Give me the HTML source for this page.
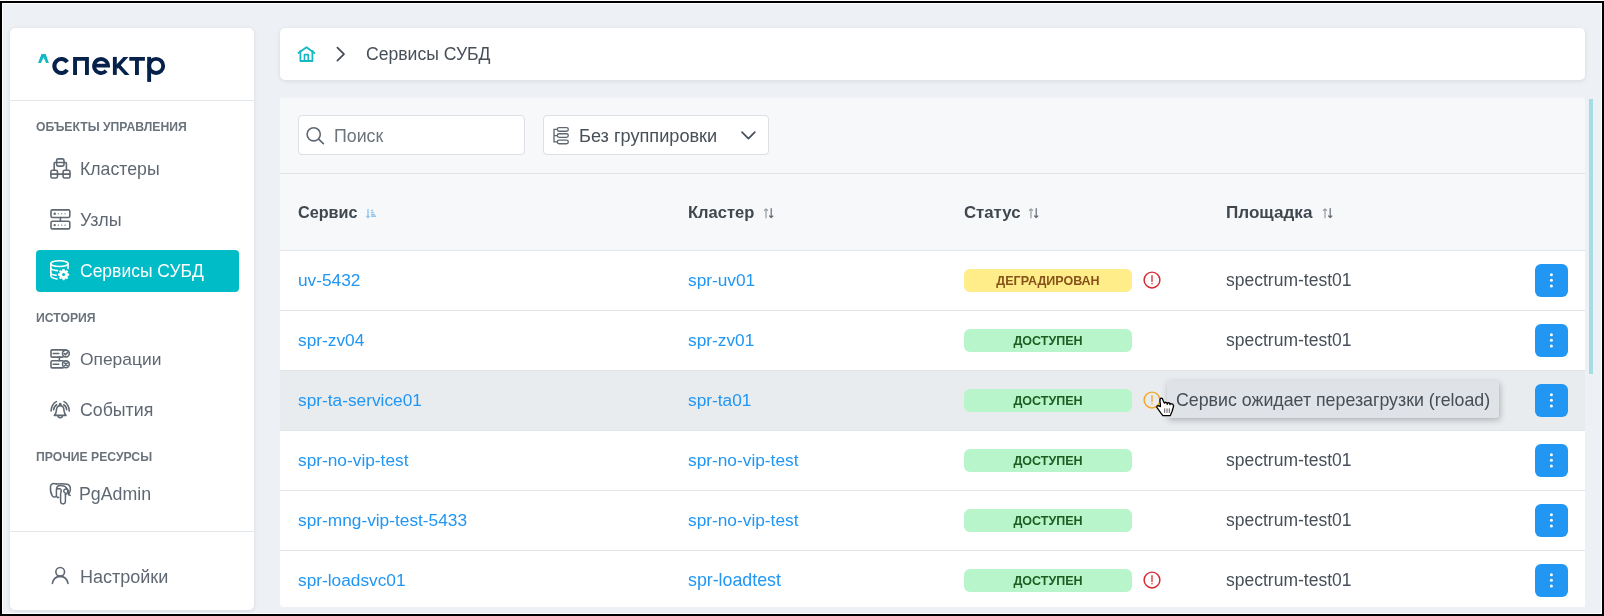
<!DOCTYPE html>
<html><head><meta charset="utf-8">
<style>
*{box-sizing:border-box;margin:0;padding:0}
html,body{width:1604px;height:616px;overflow:hidden;background:#000}
body{font-family:"Liberation Sans",sans-serif;position:relative}
.abs{position:absolute}
.card{position:absolute;background:#fff;border-radius:5px;box-shadow:0 1px 4px rgba(40,50,70,.11)}
.t{position:absolute;white-space:nowrap;line-height:1;will-change:transform}
.badge{width:168px;height:23px;border-radius:6px;font-size:12.5px;font-weight:700;text-align:center;line-height:24.6px;will-change:transform}
</style></head>
<body>
<div class="abs" style="left:0;top:0;width:1604px;height:1px;background:#fff"></div>
<div class="abs" style="left:2px;top:3px;width:1600px;height:611px;background:#fff"></div>
<div class="abs" style="left:3px;top:4px;width:1598px;height:609px;background:#edf0f4"></div>
<div class="card" style="left:10px;top:28px;width:244px;height:582px"></div>
<div class="abs" style="left:10px;top:100px;width:244px;height:1px;background:#e2e5e9"></div>
<div class="abs" style="left:10px;top:531px;width:244px;height:1px;background:#e2e5e9"></div>
<svg class="abs" style="left:0;top:0" width="200" height="100" viewBox="0 0 200 100">
<polygon points="41.5,53.9 45.7,53.9 48.9,62.9 46.1,62.9 43.6,57.5 40.9,62.9 38,62.9" fill="#14b8c4"/>
<defs><clipPath id="kc"><rect x="110" y="56.9" width="22" height="18"/></clipPath></defs>
<g fill="none" stroke="#06224a" stroke-width="3.9" stroke-linejoin="miter">
<path d="M67.2 62.1 A7 7 0 1 0 67.2 69.9" stroke-width="4.1"/>
<path d="M75.05 74.9 V58.85 H86.95 V74.9"/>
<path d="M94.05 65.6 H108.05 A7 7 0 1 0 106.2 70.8" stroke-width="3.8"/>
<path d="M114.85 56.9 V74.9"/>
<g clip-path="url(#kc)" stroke-width="3.6"><path d="M116.2 67.4 L127.2 55.6"/><path d="M117.4 64.2 L128.2 76.1"/></g>
<path d="M129.3 58.85 H144.9 M136.95 58.85 V74.9"/>
<path d="M149.15 56.9 V81.9"/>
<circle cx="156.15" cy="65.9" r="7.05"/>
</g>
</svg>
<div class="t" style="left:36px;top:120.67px;font-size:12.2px;color:#6a737c;font-weight:700;letter-spacing:0px;">ОБЪЕКТЫ УПРАВЛЕНИЯ</div>
<div class="t" style="left:36px;top:311.67px;font-size:12.2px;color:#6a737c;font-weight:700;letter-spacing:0px;">ИСТОРИЯ</div>
<div class="t" style="left:36px;top:451.07px;font-size:12.2px;color:#6a737c;font-weight:700;letter-spacing:0px;">ПРОЧИЕ РЕСУРСЫ</div>
<div class="abs" style="left:36px;top:250px;width:203px;height:42px;background:#00bcc7;border-radius:4px"></div>
<div class="t" style="left:79.5px;top:161.02px;font-size:17.7px;color:#5f6872;font-weight:400;letter-spacing:0px;">Кластеры</div>
<div class="t" style="left:79.5px;top:211.55px;font-size:17.9px;color:#5f6872;font-weight:400;letter-spacing:0px;">Узлы</div>
<div class="t" style="left:79.5px;top:263.29px;font-size:17.5px;color:#fff;font-weight:400;letter-spacing:0px;">Сервисы СУБД</div>
<div class="t" style="left:79.5px;top:351.07px;font-size:17.4px;color:#5f6872;font-weight:400;letter-spacing:0px;">Операции</div>
<div class="t" style="left:79.5px;top:402.17px;font-size:17.75px;color:#5f6872;font-weight:400;letter-spacing:0px;">События</div>
<div class="t" style="left:78.5px;top:485.83px;font-size:17.8px;color:#5f6872;font-weight:400;letter-spacing:0px;">PgAdmin</div>
<div class="t" style="left:79.5px;top:567.76px;font-size:18.0px;color:#5f6872;font-weight:400;letter-spacing:0px;">Настройки</div>
<svg class="abs" style="left:0;top:0" width="260" height="616" viewBox="0 0 260 616" fill="none" stroke="#5f6872" stroke-width="1.6" stroke-linecap="round" stroke-linejoin="round">
<!-- clusters -->
<rect x="56.6" y="158.9" width="7.4" height="7.2" rx="1.6"/>
<line x1="56.6" y1="162.5" x2="64" y2="162.5"/>
<rect x="50.9" y="170.2" width="6.6" height="7.8" rx="1.6"/>
<line x1="50.9" y1="174.1" x2="57.5" y2="174.1"/>
<rect x="63.1" y="170.2" width="6.9" height="7.8" rx="1.6"/>
<line x1="63.1" y1="174.1" x2="70" y2="174.1"/>
<path d="M56.6 162.5 H55 Q54.2 162.5 54.2 163.3 V170.2"/>
<path d="M64 162.5 H65.6 Q66.4 162.5 66.4 163.3 V170.2"/>
<line x1="57.5" y1="174.1" x2="63.1" y2="174.1"/>
<!-- nodes -->
<rect x="51" y="209.9" width="18.8" height="7.6" rx="1.4"/>
<rect x="51" y="221.3" width="18.8" height="7.6" rx="1.4"/>
<line x1="60.4" y1="217.5" x2="60.4" y2="221.3"/>
<circle cx="54.7" cy="213.7" r="1.2" fill="#5f6872" stroke="none"/>
<circle cx="54.7" cy="225.1" r="1.2" fill="#5f6872" stroke="none"/>
<g stroke-width="1.1"><line x1="58.3" y1="213.7" x2="58.6" y2="213.7"/><line x1="61.6" y1="213.7" x2="61.9" y2="213.7"/><line x1="64.9" y1="213.7" x2="65.2" y2="213.7"/>
<line x1="58.3" y1="225.1" x2="58.6" y2="225.1"/><line x1="61.6" y1="225.1" x2="61.9" y2="225.1"/><line x1="64.9" y1="225.1" x2="65.2" y2="225.1"/></g>
<!-- operations -->
<path d="M63 349.9 H52.2 Q51 349.9 51 351.1 V355.9 Q51 357.1 52.2 357.1 H63"/>
<circle cx="65.9" cy="353.5" r="3.4"/>
<line x1="53.2" y1="353.5" x2="58.8" y2="353.5"/>
<path d="M64.3 353.6 L65.5 354.8 L67.5 352.4"/>
<path d="M63 360.7 H52.2 Q51 360.7 51 361.9 V366.7 Q51 367.9 52.2 367.9 H63"/>
<circle cx="65.9" cy="364.3" r="3.4"/>
<line x1="53.2" y1="364.3" x2="58.8" y2="364.3"/>
<path d="M64.6 363 L67.2 365.6 M67.2 363 L64.6 365.6"/>
<line x1="59.4" y1="357.1" x2="59.4" y2="360.7"/>
<line x1="63" y1="349.9" x2="65.9" y2="350.1"/>
<!-- events bell -->
<circle cx="60.2" cy="404.2" r="0.7" fill="#5f6872"/>
<path d="M57.7 406.6 Q60.2 404.6 62.7 406.6 Q63.9 408 64.1 411 Q64.3 413.6 66 415.4 H54.4 Q56.1 413.6 56.3 411 Q56.5 408 57.7 406.6 Z"/>
<path d="M58 416.4 Q60.2 419 62.4 416.4"/>
<path d="M56.4 401.6 Q51.6 404 51.1 411"/>
<path d="M64 401.6 Q68.8 404 69.3 411"/>
<path d="M56.7 404.8 Q54 406.3 53.7 409.8"/>
<path d="M63.7 404.8 Q66.4 406.3 66.7 409.8"/>
<!-- pgadmin elephant -->
<g stroke-width="1.5">
<path d="M56.4 484.0 C53.5 483.0 50.8 483.6 50.5 486.2 C50.2 489.5 50.9 493.5 52.2 495.6 C53.2 497.4 55.0 497.6 56.4 496.2"/>
<path d="M56.4 484.0 C60 483.6 64.5 483.6 67.2 484.3 C69.8 485.0 70.6 487.5 70.3 490.0 C70.1 492.0 69.2 493.6 68.6 494.6 L70.2 495.4"/>
<path d="M56.4 496.2 V490.0 C56.4 487.0 58.0 485.6 60.5 485.6 C63.5 485.6 65.5 486.6 66.2 488.0"/>
<path d="M57.0 489.0 C59.0 488.3 61.0 488.8 61.2 490.3 C61.3 491.5 60.8 492.5 60.6 494.0 V501.6 C60.6 503.2 61.8 503.9 63.0 503.9 C64.3 503.9 65.4 503.0 65.4 501.6 V494.5"/>
<path d="M65.4 494.5 C67.5 493.5 68.0 491.5 67.5 490.0 C66.8 488.5 64.8 488.7 64.0 490.0 C63.4 491.2 64.0 492.6 65.2 493.0"/>
<path d="M66.2 487.8 C68.0 488.8 68.8 491.5 68.6 494.6"/>
<path d="M56.5 496.3 L57.6 497.6 L58.8 497.6"/>
</g>
<!-- settings user -->
<circle cx="60.2" cy="571.8" r="4.35"/>
<path d="M52.4 583.4 Q53.6 576.6 60.2 576.4 Q66.8 576.6 68 583.4"/>
</svg>
<svg class="abs" style="left:0;top:0" width="260" height="300" viewBox="0 0 260 300" fill="none" stroke="#fff" stroke-width="1.6" stroke-linecap="round">
<ellipse cx="59.4" cy="263.6" rx="8.6" ry="2.9"/>
<path d="M50.8 263.6 V275.8 Q51 278 57 279"/>
<path d="M50.8 268.2 Q51.2 270.2 57.4 270.6"/>
<path d="M50.8 272.8 Q51.2 274.8 56.2 275.2"/>
<path d="M68 263.6 V268.4"/>
</svg>
<svg class="abs" style="left:0;top:0" width="260" height="300" viewBox="0 0 260 300">
<g transform="translate(63.6 274.6)" fill="#fff"><circle r="4.4"/><rect x="-1.1" y="-5.6" width="2.2" height="2.6" rx="0.4" transform="rotate(0)"/><rect x="-1.1" y="-5.6" width="2.2" height="2.6" rx="0.4" transform="rotate(45)"/><rect x="-1.1" y="-5.6" width="2.2" height="2.6" rx="0.4" transform="rotate(90)"/><rect x="-1.1" y="-5.6" width="2.2" height="2.6" rx="0.4" transform="rotate(135)"/><rect x="-1.1" y="-5.6" width="2.2" height="2.6" rx="0.4" transform="rotate(180)"/><rect x="-1.1" y="-5.6" width="2.2" height="2.6" rx="0.4" transform="rotate(225)"/><rect x="-1.1" y="-5.6" width="2.2" height="2.6" rx="0.4" transform="rotate(270)"/><rect x="-1.1" y="-5.6" width="2.2" height="2.6" rx="0.4" transform="rotate(315)"/><circle r="1.5" fill="#00bcc7"/></g>
</svg>
<div class="card" style="left:280px;top:28px;width:1305px;height:52px"></div>
<svg class="abs" style="left:280px;top:28px" width="100" height="52" viewBox="280 28 100 52" fill="none" stroke-linecap="round" stroke-linejoin="round">
<path d="M298.4 53 L306.5 47.2 L314.4 53" stroke="#17b7c3" stroke-width="1.8"/>
<path d="M300.4 50.8 V61 H312.4 V50.8" stroke="#17b7c3" stroke-width="1.8"/>
<path d="M304.5 61 V54.6 H308.3 V61" stroke="#17b7c3" stroke-width="1.6"/>
<path d="M337.4 47.6 L344 54.2 L337.4 60.6" stroke="#404953" stroke-width="1.7"/>
</svg>
<div class="t" style="left:365.5px;top:46.20px;font-size:17.6px;color:#474f58;font-weight:400;letter-spacing:0px;">Сервисы СУБД</div>
<div class="card" style="left:280px;top:98px;width:1305px;height:509px;overflow:hidden;box-shadow:none;border-radius:4px 0 0 4px"><div class="abs" style="left:0;top:0;width:1305px;height:152px;background:#f7f8fa"></div><div class="abs" style="left:0;top:75px;width:1305px;height:1px;background:#e1e4e8"></div><div class="abs" style="left:0;top:152px;width:1305px;height:1px;background:#e1e4e8"></div></div>
<div class="abs" style="left:280px;top:310px;width:1305px;height:1px;background:#e1e4e8"></div>
<div class="t" style="left:298.1px;top:271.66px;font-size:17.3px;color:#2196f3;font-weight:400;letter-spacing:0px;">uv-5432</div>
<div class="t" style="left:687.6px;top:271.66px;font-size:17.3px;color:#2196f3;font-weight:400;letter-spacing:0px;">spr-uv01</div>
<div class="abs badge" style="left:964px;top:269px;background:#ffed89;color:#86521a"><span>ДЕГРАДИРОВАН</span></div>
<svg class="abs" style="left:1140px;top:268px" width="24" height="24" viewBox="-12 -12 24 24" fill="none" stroke="#d7282f">
<circle r="7.9" stroke-width="1.45"/><line x1="0" y1="-4.3" x2="0" y2="1.5" stroke-width="1.3" stroke-linecap="round"/><circle cy="3.7" r="0.75" fill="#d7282f" stroke="none"/></svg>
<div class="t" style="left:1225.6px;top:271.99px;font-size:17.5px;color:#474f58;font-weight:400;letter-spacing:0px;">spectrum-test01</div>
<div class="abs" style="left:1535px;top:264px;width:33px;height:33px;border-radius:6px;background:#2196f3"></div>
<svg class="abs" style="left:1535px;top:264px" width="33" height="33" viewBox="0 0 33 33" fill="#fff"><circle cx="16.4" cy="10.7" r="1.5"/><circle cx="16.4" cy="16.3" r="1.5"/><circle cx="16.4" cy="21.9" r="1.5"/></svg>
<div class="abs" style="left:280px;top:370px;width:1305px;height:1px;background:#e1e4e8"></div>
<div class="t" style="left:298.1px;top:331.66px;font-size:17.3px;color:#2196f3;font-weight:400;letter-spacing:0px;">spr-zv04</div>
<div class="t" style="left:687.6px;top:331.66px;font-size:17.3px;color:#2196f3;font-weight:400;letter-spacing:0px;">spr-zv01</div>
<div class="abs badge" style="left:964px;top:329px;background:#b9f5cb;color:#1b5e20"><span>ДОСТУПЕН</span></div>
<div class="t" style="left:1225.6px;top:331.99px;font-size:17.5px;color:#474f58;font-weight:400;letter-spacing:0px;">spectrum-test01</div>
<div class="abs" style="left:1535px;top:324px;width:33px;height:33px;border-radius:6px;background:#2196f3"></div>
<svg class="abs" style="left:1535px;top:324px" width="33" height="33" viewBox="0 0 33 33" fill="#fff"><circle cx="16.4" cy="10.7" r="1.5"/><circle cx="16.4" cy="16.3" r="1.5"/><circle cx="16.4" cy="21.9" r="1.5"/></svg>
<div class="abs" style="left:280px;top:371px;width:1305px;height:59px;background:#e9ecef"></div>
<div class="abs" style="left:280px;top:430px;width:1305px;height:1px;background:#e1e4e8"></div>
<div class="t" style="left:298.1px;top:391.66px;font-size:17.3px;color:#2196f3;font-weight:400;letter-spacing:0px;">spr-ta-service01</div>
<div class="t" style="left:687.6px;top:391.66px;font-size:17.3px;color:#2196f3;font-weight:400;letter-spacing:0px;">spr-ta01</div>
<div class="abs badge" style="left:964px;top:389px;background:#b9f5cb;color:#1b5e20"><span>ДОСТУПЕН</span></div>
<svg class="abs" style="left:1140px;top:388px" width="24" height="24" viewBox="-12 -12 24 24" fill="none" stroke="#f5a623">
<circle r="7.9" stroke-width="1.45"/><line x1="0" y1="-4.3" x2="0" y2="1.5" stroke-width="1.3" stroke-linecap="round"/><circle cy="3.7" r="0.75" fill="#f5a623" stroke="none"/></svg>
<div class="t" style="left:1225.6px;top:391.99px;font-size:17.5px;color:#474f58;font-weight:400;letter-spacing:0px;">spectrum-test01</div>
<div class="abs" style="left:1535px;top:384px;width:33px;height:33px;border-radius:6px;background:#2196f3"></div>
<svg class="abs" style="left:1535px;top:384px" width="33" height="33" viewBox="0 0 33 33" fill="#fff"><circle cx="16.4" cy="10.7" r="1.5"/><circle cx="16.4" cy="16.3" r="1.5"/><circle cx="16.4" cy="21.9" r="1.5"/></svg>
<div class="abs" style="left:280px;top:490px;width:1305px;height:1px;background:#e1e4e8"></div>
<div class="t" style="left:298.1px;top:451.66px;font-size:17.3px;color:#2196f3;font-weight:400;letter-spacing:0px;">spr-no-vip-test</div>
<div class="t" style="left:687.6px;top:451.66px;font-size:17.3px;color:#2196f3;font-weight:400;letter-spacing:0px;">spr-no-vip-test</div>
<div class="abs badge" style="left:964px;top:449px;background:#b9f5cb;color:#1b5e20"><span>ДОСТУПЕН</span></div>
<div class="t" style="left:1225.6px;top:451.99px;font-size:17.5px;color:#474f58;font-weight:400;letter-spacing:0px;">spectrum-test01</div>
<div class="abs" style="left:1535px;top:444px;width:33px;height:33px;border-radius:6px;background:#2196f3"></div>
<svg class="abs" style="left:1535px;top:444px" width="33" height="33" viewBox="0 0 33 33" fill="#fff"><circle cx="16.4" cy="10.7" r="1.5"/><circle cx="16.4" cy="16.3" r="1.5"/><circle cx="16.4" cy="21.9" r="1.5"/></svg>
<div class="abs" style="left:280px;top:550px;width:1305px;height:1px;background:#e1e4e8"></div>
<div class="t" style="left:298.1px;top:511.66px;font-size:17.3px;color:#2196f3;font-weight:400;letter-spacing:0px;">spr-mng-vip-test-5433</div>
<div class="t" style="left:687.6px;top:511.66px;font-size:17.3px;color:#2196f3;font-weight:400;letter-spacing:0px;">spr-no-vip-test</div>
<div class="abs badge" style="left:964px;top:509px;background:#b9f5cb;color:#1b5e20"><span>ДОСТУПЕН</span></div>
<div class="t" style="left:1225.6px;top:511.99px;font-size:17.5px;color:#474f58;font-weight:400;letter-spacing:0px;">spectrum-test01</div>
<div class="abs" style="left:1535px;top:504px;width:33px;height:33px;border-radius:6px;background:#2196f3"></div>
<svg class="abs" style="left:1535px;top:504px" width="33" height="33" viewBox="0 0 33 33" fill="#fff"><circle cx="16.4" cy="10.7" r="1.5"/><circle cx="16.4" cy="16.3" r="1.5"/><circle cx="16.4" cy="21.9" r="1.5"/></svg>
<div class="t" style="left:298.1px;top:571.66px;font-size:17.3px;color:#2196f3;font-weight:400;letter-spacing:0px;">spr-loadsvc01</div>
<div class="t" style="left:687.6px;top:571.93px;font-size:17.8px;color:#2196f3;font-weight:400;letter-spacing:0px;">spr-loadtest</div>
<div class="abs badge" style="left:964px;top:569px;background:#b9f5cb;color:#1b5e20"><span>ДОСТУПЕН</span></div>
<svg class="abs" style="left:1140px;top:568px" width="24" height="24" viewBox="-12 -12 24 24" fill="none" stroke="#d7282f">
<circle r="7.9" stroke-width="1.45"/><line x1="0" y1="-4.3" x2="0" y2="1.5" stroke-width="1.3" stroke-linecap="round"/><circle cy="3.7" r="0.75" fill="#d7282f" stroke="none"/></svg>
<div class="t" style="left:1225.6px;top:571.99px;font-size:17.5px;color:#474f58;font-weight:400;letter-spacing:0px;">spectrum-test01</div>
<div class="abs" style="left:1535px;top:564px;width:33px;height:33px;border-radius:6px;background:#2196f3"></div>
<svg class="abs" style="left:1535px;top:564px" width="33" height="33" viewBox="0 0 33 33" fill="#fff"><circle cx="16.4" cy="10.7" r="1.5"/><circle cx="16.4" cy="16.3" r="1.5"/><circle cx="16.4" cy="21.9" r="1.5"/></svg>
<div class="abs" style="left:298px;top:115px;width:227px;height:40px;background:#fff;border:1px solid #dcdfe4;border-radius:4px"></div>
<div class="abs" style="left:543px;top:115px;width:226px;height:40px;background:#fff;border:1px solid #dcdfe4;border-radius:4px"></div>
<svg class="abs" style="left:290px;top:110px" width="500" height="50" viewBox="290 110 500 50" fill="none" stroke="#5f6872" stroke-linecap="round" stroke-linejoin="round">
<circle cx="313.7" cy="134.3" r="6.6" stroke-width="1.6"/><line x1="318.6" y1="139.2" x2="323.4" y2="143.6" stroke-width="1.7"/>
<rect x="557.3" y="127.6" width="11" height="3.6" rx="1.8" stroke-width="1.35"/>
<rect x="557.3" y="133.75" width="11" height="3.6" rx="1.8" stroke-width="1.35"/>
<rect x="557.3" y="140.1" width="11" height="3.6" rx="1.8" stroke-width="1.35"/>
<path d="M557.3 129.4 H554 V141.9 H557.3 M554 135.55 H557.3" stroke-width="1.35" stroke-linecap="butt" stroke-linejoin="miter"/>
<path d="M742 132.2 L748.4 138.6 L754.8 132.2" stroke="#474f58" stroke-width="1.7"/>
</svg>
<div class="t" style="left:333.6px;top:128.13px;font-size:17.8px;color:#6c747c;font-weight:400;letter-spacing:0px;">Поиск</div>
<div class="t" style="left:579.2px;top:127.04px;font-size:18.15px;color:#474f58;font-weight:400;letter-spacing:0px;">Без группировки</div>
<div class="t" style="left:298px;top:204.39px;font-size:16.2px;color:#3f474f;font-weight:700;letter-spacing:0px;">Сервис</div>
<div class="t" style="left:687.9px;top:204.13px;font-size:16.5px;color:#3f474f;font-weight:700;letter-spacing:0px;">Кластер</div>
<div class="t" style="left:964px;top:204.52px;font-size:16.75px;color:#3f474f;font-weight:700;letter-spacing:0px;">Статус</div>
<div class="t" style="left:1226px;top:203.62px;font-size:17.1px;color:#3f474f;font-weight:700;letter-spacing:0px;">Площадка</div>
<svg class="abs" style="left:366.0px;top:206px" width="12" height="14" viewBox="0 0 12 14" fill="none" stroke="#86c3f2" stroke-width="1.3" stroke-linecap="butt">
<line x1="2" y1="3" x2="2" y2="11"/><path d="M0.5 9.9 L2 11.6 L3.5 9.9" stroke-linejoin="round"/><line x1="5.1" y1="4.4" x2="7" y2="4.4"/><line x1="5.1" y1="6.5" x2="7.8" y2="6.5"/><line x1="5.1" y1="8.5" x2="8.8" y2="8.5"/><line x1="5.1" y1="10.2" x2="10" y2="10.2" stroke-width="1.5"/></svg>
<svg class="abs" style="left:762.7px;top:206px" width="12" height="14" viewBox="0 0 12 14" fill="none" stroke-width="1.2" stroke-linecap="round" stroke-linejoin="round">
<path d="M3 11.8 V2.8 M1.4 4.4 L3 2.8 L4.6 4.4" stroke="#959ca3"/><path d="M8.2 2.6 V11.6 M6.6 10 L8.2 11.6 L9.8 10" stroke="#646c75"/></svg>
<svg class="abs" style="left:1028.2px;top:206px" width="12" height="14" viewBox="0 0 12 14" fill="none" stroke-width="1.2" stroke-linecap="round" stroke-linejoin="round">
<path d="M3 11.8 V2.8 M1.4 4.4 L3 2.8 L4.6 4.4" stroke="#959ca3"/><path d="M8.2 2.6 V11.6 M6.6 10 L8.2 11.6 L9.8 10" stroke="#646c75"/></svg>
<svg class="abs" style="left:1321.7px;top:206px" width="12" height="14" viewBox="0 0 12 14" fill="none" stroke-width="1.2" stroke-linecap="round" stroke-linejoin="round">
<path d="M3 11.8 V2.8 M1.4 4.4 L3 2.8 L4.6 4.4" stroke="#959ca3"/><path d="M8.2 2.6 V11.6 M6.6 10 L8.2 11.6 L9.8 10" stroke="#646c75"/></svg>
<div class="abs" style="left:1167px;top:381px;width:332px;height:37px;background:#dfe2e6;border-radius:3px;box-shadow:1px 2px 6px rgba(0,0,0,.26)"></div>
<div class="t" style="left:1175.8px;top:391.63px;font-size:17.8px;color:#454d56;font-weight:400;letter-spacing:0px;">Сервис ожидает перезагрузки (reload)</div>
<svg class="abs" style="left:1150px;top:390px" width="30" height="32" viewBox="1150 390 30 32">
<polygon points="1160.86,398.14 1162.23,398.36 1163.36,401.09 1164.50,403.14 1165.64,402.23 1167.00,402.91 1167.23,404.27 1167.91,402.68 1169.50,402.91 1169.95,404.50 1170.64,403.59 1172.68,404.05 1173.59,405.64 1173.36,407.00 1172.00,411.55 1170.64,414.73 1170.18,415.64 1162.91,415.64 1161.09,413.36 1158.82,410.18 1156.77,407.45 1157.00,406.09 1158.36,405.64 1160.41,406.55 1160.41,404.73 1159.95,401.09 1160.18,398.82" fill="#fff" stroke="#000" stroke-width="1.3" stroke-linejoin="round"/>
<g stroke="#333" stroke-width="0.8"><line x1="1164.7" y1="408.4" x2="1164.7" y2="412.9"/><line x1="1167" y1="408.4" x2="1167" y2="412.9"/><line x1="1169.3" y1="408.4" x2="1169.3" y2="412.9"/></g>
</svg>
<div class="abs" style="left:1589px;top:99px;width:4px;height:275px;background:#a5dde2"></div>
</body></html>
